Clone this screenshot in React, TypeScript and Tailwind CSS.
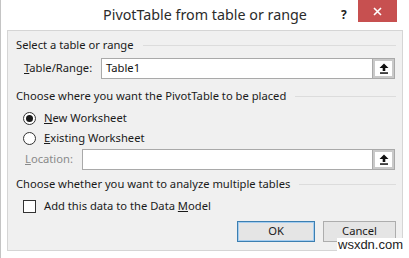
import React from "react";

const font = { fontFamily: '"Noto Sans", "Open Sans", sans-serif' };

function UpArrow() {
  return (
    <svg width="10" height="11" viewBox="0 0 10 11" className="block">
      <path d="M5 0.5 L9.5 5 L6.3 5 L6.3 8 L3.7 8 L3.7 5 L0.5 5 Z" fill="#111" />
      <rect x="1" y="9.3" width="8" height="1.5" fill="#111" />
    </svg>
  );
}

function RefInput({ value }: { value?: string }) {
  return (
    <div className="flex h-[21px] flex-1 border border-[#a9a9a9] bg-white">
      <div className="flex flex-1 items-center px-[4px] text-[11.2px] text-[#111]">{value}</div>
      <div className="flex w-[22px] items-center justify-center border-l border-[#a9a9a9] bg-white shadow-[inset_0_0_0_2px_#c9c9c9]">
        <UpArrow />
      </div>
    </div>
  );
}

function Heading({ children }: { children: React.ReactNode }) {
  return (
    <div className="flex items-center gap-[9px] text-[11.2px] leading-[16px] text-[#1a1a1a]">
      <span className="whitespace-nowrap">{children}</span>
      <div className="h-px flex-1 bg-[#dcdcdc]" />
    </div>
  );
}

export default function App() {
  return (
    <div className="relative h-[258px] w-[409px] overflow-hidden border-l border-[#c4c4c4] bg-white" style={font}>
      <div className="relative flex h-[30px] items-center justify-center">
        <span className="text-[14.3px] text-[#2b2b2b]">PivotTable from table or range</span>
        <span className="absolute left-[340px] top-[6px] text-[12px] font-bold text-[#222]">?</span>
        <div className="absolute left-[357px] top-0 flex h-[22px] w-[39px] items-center justify-center bg-[#c75050]">
          <svg width="9" height="9" viewBox="0 0 9 9">
            <path d="M1 1 L8 8 M8 1 L1 8" stroke="#fff" strokeWidth="1.6" />
          </svg>
        </div>
      </div>

      <div className="mx-[6px] flex h-[221px] flex-col border border-[#d5d5d5] bg-[#f0f0f0] pl-[8px] pr-[6px] pt-[6px]">
        <Heading>Select a table or range</Heading>
        <div className="mt-[5px] flex items-center pl-[8px] pr-[1px] text-[11.2px] text-[#1a1a1a]">
          <span className="w-[77px]">
            <u>T</u>able/Range:
          </span>
          <RefInput value="Table1" />
        </div>

        <div className="mt-[9px]">
          <Heading>Choose where you want the PivotTable to be placed</Heading>
        </div>
        <div className="mt-[6px] flex items-center gap-[8px] pl-[7px] text-[11.2px] leading-[16px] text-[#1a1a1a]">
          <span className="flex h-[13px] w-[13px] items-center justify-center rounded-full border border-[#333] bg-white">
            <span className="h-[7px] w-[7px] rounded-full bg-[#1a1a1a]" />
          </span>
          <span>
            <u>N</u>ew Worksheet
          </span>
        </div>
        <div className="mt-[4px] flex items-center gap-[8px] pl-[7px] text-[11.2px] leading-[16px] text-[#1a1a1a]">
          <span className="h-[13px] w-[13px] rounded-full border border-[#333] bg-white" />
          <span>
            <u>E</u>xisting Worksheet
          </span>
        </div>
        <div className="mt-[3px] flex items-center pl-[9px] pr-[1px] text-[11.2px] text-[#8a8a8a]">
          <span className="w-[57px]">
            <u>L</u>ocation:
          </span>
          <RefInput />
        </div>

        <div className="mt-[6px]">
          <Heading>Choose whether you want to analyze multiple tables</Heading>
        </div>
        <div className="mt-[6px] flex items-center gap-[8px] pl-[7px] text-[11.2px] leading-[16px] text-[#1a1a1a]">
          <span className="h-[13px] w-[13px] border border-[#333] bg-white" />
          <span>
            Add this data to the Data <u>M</u>odel
          </span>
        </div>

        <div className="mt-[7px] flex justify-end gap-[8px]">
          <button className="h-[21px] w-[78px] border border-[#3c7fb1] bg-[#e5e5e5] text-[11.2px] text-[#1a1a1a] shadow-[inset_0_0_0_1px_#a5cdf0]">
            OK
          </button>
          <button className="h-[21px] w-[73px] border border-[#adadad] bg-[#e5e5e5] text-[11.2px] text-[#1a1a1a]">
            Cancel
          </button>
        </div>
      </div>

      <span className="absolute left-[336px] top-[238px] bg-white px-[1px] text-[13px] leading-[14px] text-[#222]" style={{ fontFamily: '"Liberation Sans", Arial, sans-serif' }}>
        wsxdn.com
      </span>
    </div>
  );
}
